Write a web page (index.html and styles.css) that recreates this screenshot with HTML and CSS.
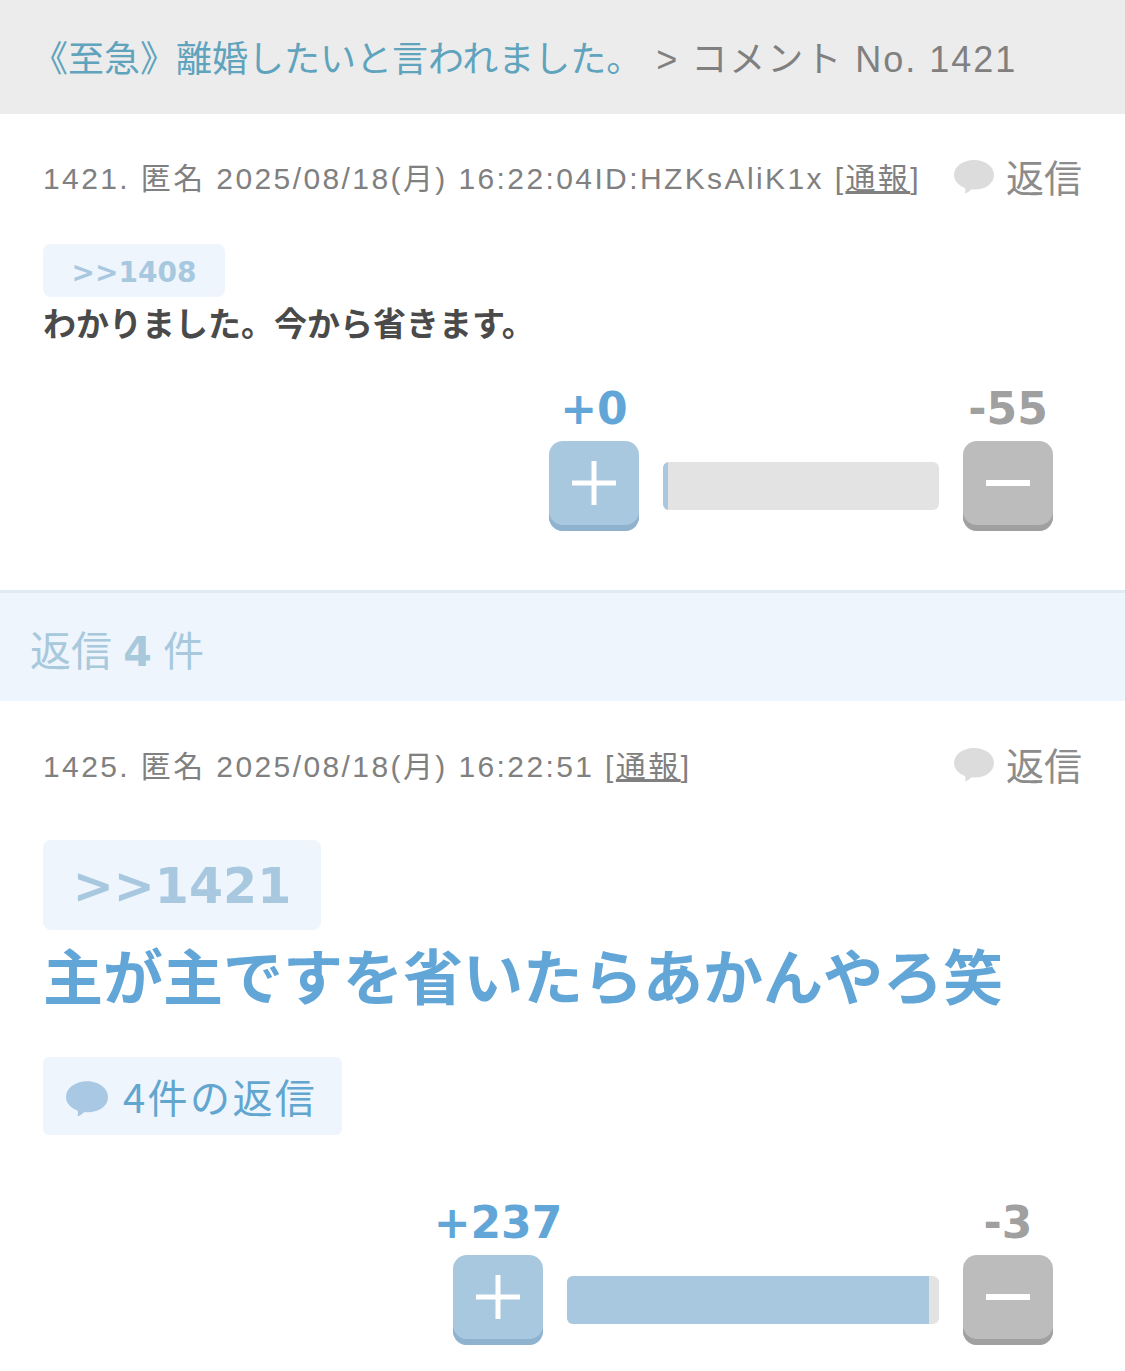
FILE: index.html
```html
<!DOCTYPE html>
<html lang="ja">
<head>
<meta charset="utf-8">
<title>コメント No. 1421</title>
<link rel="stylesheet" href="styles.css">
</head>
<body>
<svg class="defs" width="0" height="0" aria-hidden="true">
  <symbol id="bubble" viewBox="0 0 40 36">
    <path d="M20 1C31 1 40 7.500 40 16C40 24.500 31.500 30.500 21 30.500C19.500 30.500 18.500 30.500 17.500 30.300C16 32 13.500 33.800 11 34.500C11.500 33 11.500 30.500 11 29C4.500 26.500 0 21.500 0 16C0 7.500 9 1 20 1Z"/>
  </symbol>
  <symbol id="plus" viewBox="0 0 44 44">
    <path d="M19.500 0h5v19.500H44v5H24.500V44h-5V24.500H0v-5h19.500z"/>
  </symbol>
  <symbol id="minus" viewBox="0 0 44 6">
    <path d="M0 0h44v6H0z"/>
  </symbol>
</svg>

<header class="page-head">
  <a class="thread-link">《至急》離婚したいと言われました。</a><span class="crumb"> &gt; コメント No. 1421</span>
</header>

<article class="comment comment-main">
  <div class="meta-row">
    <div class="meta">1421. 匿名 2025/08/18(月) 16:22:04ID:HZKsAliK1x [<u>通報</u>]</div>
    <div class="reply-link"><svg class="bubble"><use href="#bubble"/></svg>返信</div>
  </div>
  <div class="anchor anchor-small">&gt;&gt;1408</div>
  <p class="body body-small">わかりました。今から省きます。</p>
  <div class="votes">
    <div class="vote-col">
      <span class="count count-plus">+0</span>
      <button class="vote-btn btn-plus"><svg class="icon-plus"><use href="#plus"/></svg></button>
    </div>
    <div class="bar bar-short"><div class="bar-fill" style="width:1.800%"></div></div>
    <div class="vote-col">
      <span class="count count-minus">-55</span>
      <button class="vote-btn btn-minus"><svg class="icon-minus"><use href="#minus"/></svg></button>
    </div>
  </div>
</article>

<h2 class="reply-head">返信 <b>4</b> 件</h2>

<article class="comment comment-reply">
  <div class="meta-row">
    <div class="meta">1425. 匿名 2025/08/18(月) 16:22:51 [<u>通報</u>]</div>
    <div class="reply-link"><svg class="bubble"><use href="#bubble"/></svg>返信</div>
  </div>
  <div class="anchor anchor-large">&gt;&gt;1421</div>
  <p class="body body-large">主が主ですを省いたらあかんやろ笑</p>
  <div class="replies-btn"><svg class="bubble bubble-blue"><use href="#bubble"/></svg>4件の返信</div>
  <div class="votes votes-reply">
    <div class="vote-col">
      <span class="count count-plus">+237</span>
      <button class="vote-btn btn-plus"><svg class="icon-plus"><use href="#plus"/></svg></button>
    </div>
    <div class="bar bar-long"><div class="bar-fill" style="width:97.200%"></div></div>
    <div class="vote-col">
      <span class="count count-minus">-3</span>
      <button class="vote-btn btn-minus"><svg class="icon-minus"><use href="#minus"/></svg></button>
    </div>
  </div>
</article>
</body>
</html>
```
FILE: styles.css
```css
* { box-sizing: border-box; }
html, body { margin: 0; padding: 0; }
body {
  width: 1125px;
  height: 1371px;
  overflow: hidden;
  background: #fff;
  color: #808080;
  font-family: "Noto Sans CJK JP", "Noto Sans", sans-serif;
}
.defs { position: absolute; }

.page-head {
  height: 114px;
  background: #ececec;
  padding-left: 32px;
  font-size: 36px;
  line-height: 112px;
  white-space: nowrap;
}
.thread-link { color: #5fa3bd; }
.crumb {
  margin-left: 2px;
  color: #808080;
  font-family: "Liberation Sans", "Noto Sans CJK JP", sans-serif;
  letter-spacing: 2px;
}

.comment { padding: 0 43px; }
.comment-main { height: 476px; padding-top: 38px; }
.comment-reply { padding-top: 39px; }

.meta-row {
  display: flex;
  justify-content: space-between;
  align-items: center;
  height: 48px;
}
.meta {
  align-self: flex-start;
  font-family: "Liberation Sans", "Noto Sans CJK JP", sans-serif;
  font-size: 30px;
  letter-spacing: 2.400px;
  line-height: 54px;
  color: #808080;
  white-space: nowrap;
}
.reply-link {
  display: flex;
  align-items: center;
  font-size: 38px;
  line-height: 48px;
  color: #8c8c8c;
  white-space: nowrap;
}
.bubble {
  width: 40px;
  height: 36px;
  margin-right: 12px;
  margin-top: 2px;
  fill: #dcdcdc;
}
.bubble-blue {
  width: 42px;
  height: 38px;
  margin-top: 5px;
  margin-right: 15px;
  fill: #a8c8e4;
}

.anchor {
  background: #eef5fc;
  border-radius: 8px;
  font-family: "DejaVu Sans", sans-serif;
  font-weight: 700;
  color: #a8c8e0;
  text-align: center;
}
.anchor-small {
  width: 182px;
  height: 53px;
  margin-top: 44px;
  font-size: 28px;
  line-height: 58px;
}
.anchor-large {
  width: 278px;
  height: 90px;
  margin-top: 52px;
  font-size: 49px;
  line-height: 94px;
}

.body { margin: 0; font-weight: 700; white-space: nowrap; }
.body-small {
  font-size: 33px;
  line-height: 50px;
  color: #4a4a4a;
}
.body-large {
  font-size: 60px;
  line-height: 88px;
  color: #62a6d8;
}

.replies-btn {
  display: inline-flex;
  align-items: center;
  width: 299px;
  height: 78px;
  margin-top: 39px;
  padding-left: 23px;
  background: #eef5fc;
  border-radius: 6px;
  font-size: 40px;
  letter-spacing: 2.400px;
  color: #62a6d0;
  white-space: nowrap;
}

.votes {
  display: flex;
  justify-content: flex-end;
  align-items: flex-end;
  gap: 24px;
  margin-top: 34px;
  padding-right: 29px;
}
.votes-reply { margin-top: 60px; }
.vote-col {
  display: flex;
  flex-direction: column;
  align-items: center;
  width: 90px;
}
.count {
  height: 56px;
  margin-bottom: 4px;
  font-family: "DejaVu Sans", sans-serif;
  font-size: 44px;
  font-weight: 700;
  line-height: 56px;
  white-space: nowrap;
}
.count-plus { color: #62a6d8; }
.count-minus { color: #a0a0a0; }

.vote-btn {
  display: flex;
  align-items: center;
  justify-content: center;
  width: 90px;
  height: 90px;
  padding: 0 0 6px;
  border: 0;
  border-radius: 14px;
}
.btn-plus { background: #a8c8df; box-shadow: inset 0 -6px 0 #8fb2cf; }
.btn-minus { background: #bcbcbc; box-shadow: inset 0 -6px 0 #a0a0a0; }
.icon-plus { width: 44px; height: 44px; fill: #fff; }
.icon-minus { width: 44px; height: 6px; fill: #fff; }

.bar {
  height: 48px;
  margin-bottom: 21px;
  background: #e3e3e3;
  border-radius: 6px;
  overflow: hidden;
}
.bar-short { width: 276px; }
.bar-long { width: 372px; }
.bar-fill { height: 100%; background: #a8c8df; }

.reply-head {
  margin: 0;
  height: 111px;
  padding-left: 30px;
  background: #eef5fc;
  border-top: 3px solid #dfeaf4;
  font-size: 41px;
  font-weight: 400;
  word-spacing: 2px;
  line-height: 110px;
  color: #a8c8dc;
}
.reply-head b {
  font-family: "DejaVu Sans", sans-serif;
  font-weight: 700;
}
```
